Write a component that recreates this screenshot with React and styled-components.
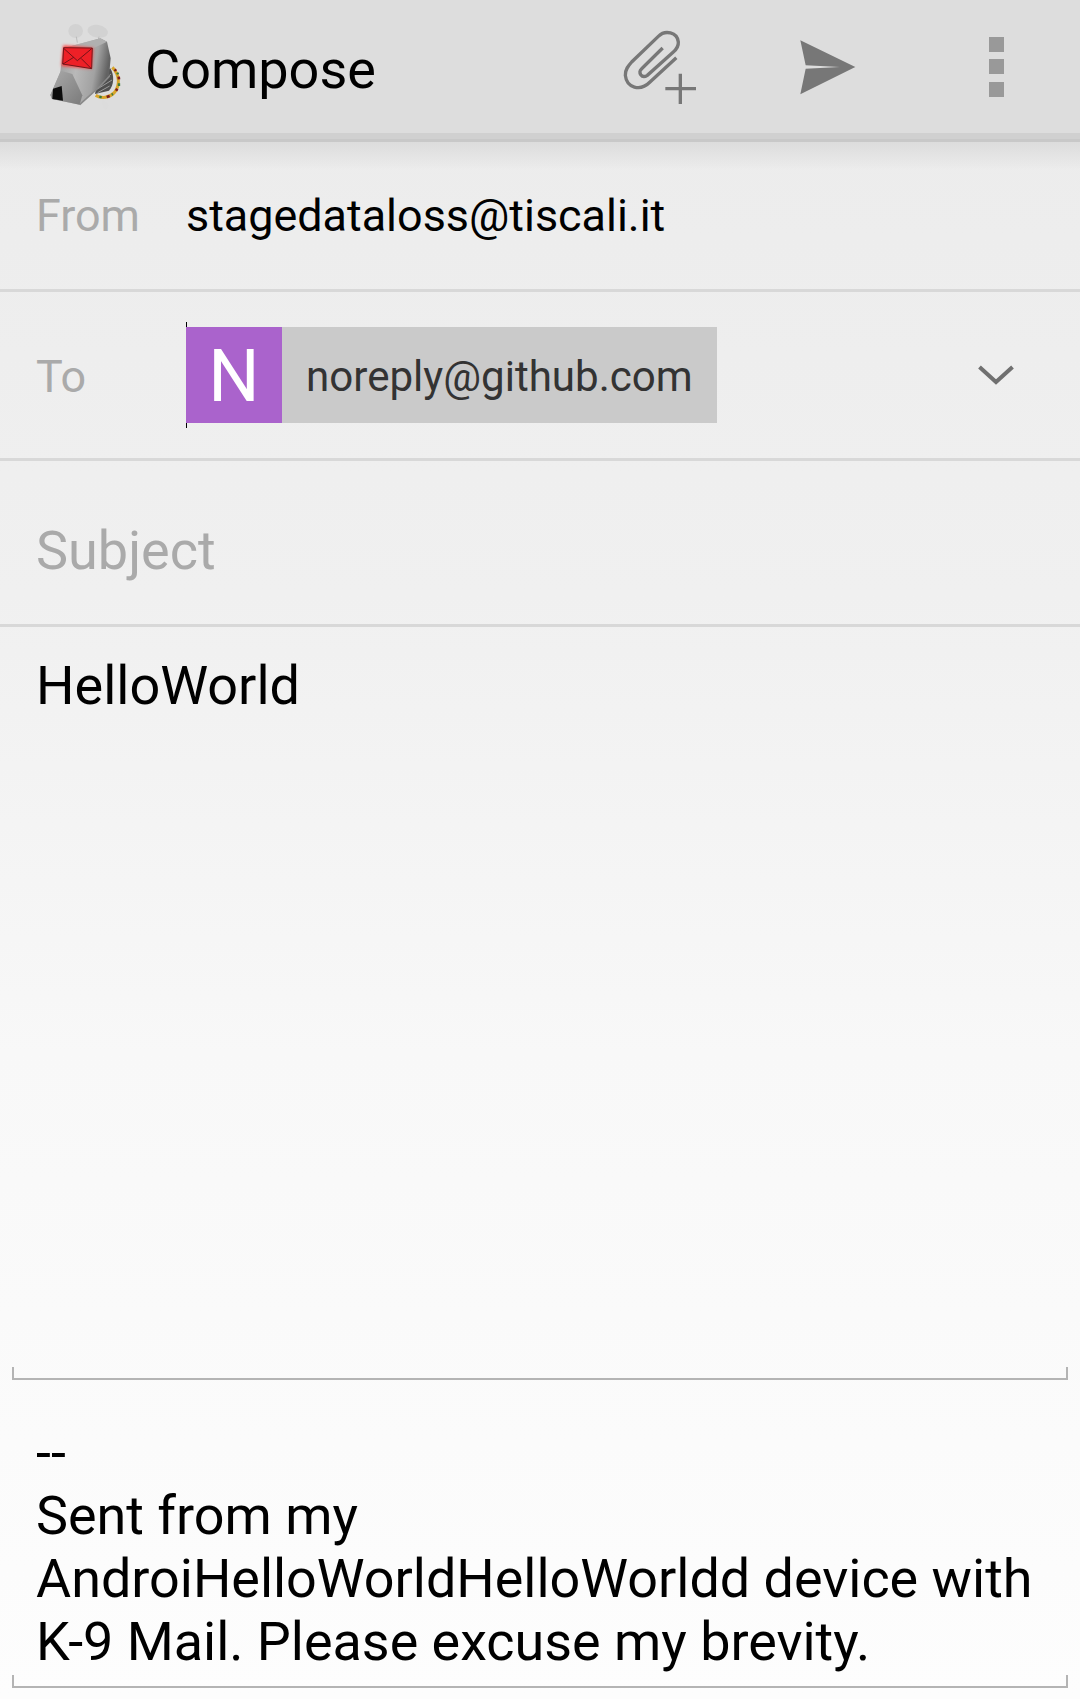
import React from 'react';
import styled, { createGlobalStyle } from 'styled-components';

const Global = createGlobalStyle`
  html, body {
    margin: 0;
    padding: 0;
    background: #fdfdfd;
  }
  * {
    box-sizing: border-box;
  }
`;

const Page = styled.div`
  width: 1080px;
  height: 1699px;
  overflow: hidden;
  display: flex;
  flex-direction: column;
  font-family: Roboto, "Liberation Sans", sans-serif;
  color: #000;
  background: linear-gradient(180deg, #ebebeb 0%, #f0f0f0 35%, #f8f8f8 62%, #fdfdfd 100%);
`;

const ActionBar = styled.header`
  position: relative;
  flex: none;
  height: 142px;
  display: flex;
  align-items: flex-start;
  background: #dddddd;
  border-bottom: 9px solid #d0d0d0;

  &::before {
    content: '';
    position: absolute;
    left: 0;
    right: 0;
    bottom: -9px;
    height: 3px;
    background: #c8c8c8;
  }

  &::after {
    content: '';
    position: absolute;
    left: 0;
    right: 0;
    top: 142px;
    height: 28px;
    background: linear-gradient(180deg, #dcdcdc, rgba(235, 235, 235, 0));
  }
`;

const Logo = styled.svg`
  flex: none;
  width: 80px;
  height: 93px;
  margin: 20px 0 0 47px;
`;

const Title = styled.h1`
  margin: 37px 0 0 18px;
  font-size: 54px;
  line-height: 66px;
  font-weight: 400;
  flex: 1;
`;

const ActionSlot = styled.div`
  flex: none;
  width: 168px;
  height: 133px;
  display: flex;
  align-items: center;
  justify-content: center;
`;

const Dots = styled.div`
  display: flex;
  flex-direction: column;
  gap: 7.5px;
`;

const Dot = styled.span`
  display: block;
  width: 15px;
  height: 15px;
  background: #999999;
`;

const Row = styled.div`
  flex: none;
  height: ${(p) => p.$height}px;
  display: flex;
  align-items: center;
  padding-left: 36px;
  border-bottom: 3px solid #d8d8d8;
`;

const Label = styled.span`
  flex: none;
  width: 150px;
  padding-top: ${(p) => p.$nudge || 0}px;
  font-size: 44.9px;
  color: #aaaaaa;
`;

const Value = styled.span`
  font-size: 44.9px;
`;

const Recipients = styled.div`
  position: relative;
  flex: 1;
  display: flex;
  align-items: center;
  height: 106px;
`;

const Cursor = styled.i`
  position: absolute;
  left: 0;
  top: 0;
  bottom: 0;
  width: 1px;
  background: #000;
`;

const Chip = styled.div`
  position: relative;
  display: flex;
  align-items: center;
  width: 531px;
  height: 96px;
  background: #cacaca;
  color: #333333;
  font-size: 42.1px;
`;

const ChipText = styled.span`
  padding-top: 2px;
`;

const Avatar = styled.span`
  flex: none;
  width: 96px;
  height: 96px;
  margin-right: 24px;
  padding-top: 2px;
  display: flex;
  align-items: center;
  justify-content: center;
  background: #aa63cc;
  color: #fff;
  font-size: 72px;
`;

const Chevron = styled.svg`
  position: absolute;
  right: 66px;
  top: 43px;
  width: 36px;
  height: 20px;
`;

const Subject = styled.span`
  padding-top: 16px;
  font-size: 54px;
  color: #aaaaaa;
`;

const Message = styled.div`
  flex: none;
  height: 740px;
  padding: 29px 0 0 36px;
  font-size: 54px;
  line-height: 60px;
`;

const Bracket = styled.div`
  flex: none;
  height: 13px;
  margin: 0 12px;
  border: 2px solid #b4b4b4;
  border-top: 0;
`;

const Signature = styled.div`
  flex: none;
  height: 295px;
  padding: 41px 0 0 36px;
  font-size: 53.9px;
  line-height: 63px;
`;

const K9Logo = () => (
  <Logo viewBox="140 60 240 279">
    <defs>
      <linearGradient id="head" x1="0" y1="0" x2="1" y2="0.2">
        <stop offset="0" stopColor="#8d8d8d" />
        <stop offset="0.5" stopColor="#b9b9b9" />
        <stop offset="0.8" stopColor="#a2a2a2" />
        <stop offset="1" stopColor="#626262" />
      </linearGradient>
      <linearGradient id="snout" x1="0" y1="0" x2="1" y2="1">
        <stop offset="0" stopColor="#aaaaaa" />
        <stop offset="1" stopColor="#7b7b7b" />
      </linearGradient>
      <filter id="glow" x="-30%" y="-30%" width="160%" height="160%">
        <feGaussianBlur stdDeviation="5" />
      </filter>
    </defs>
    <ellipse cx="226" cy="93" rx="22" ry="21" fill="#d2d2d2" />
    <ellipse cx="292" cy="94" rx="31" ry="19" fill="#d2d2d2" transform="rotate(10 292 94)" />
    <path d="M228 110l3 18M296 110l-6 20" stroke="#bcbcbc" strokeWidth="3" />
    <path d="M336 202C358 224 360 256 342 278C326 294 304 296 286 286" fill="none" stroke="#d8a52a" strokeWidth="9" />
    <path d="M343 208l4 5M355 230l1 8M351 266l-4 6M328 288l-9 3" stroke="#7c1d1d" strokeWidth="8" />
    <path d="M351 218l2 5M356 250l0 8M338 282l-4 2M304 292l-7-2" stroke="#3c7a3c" strokeWidth="7" />
    <path d="M330 205C342 225 342 255 326 272L284 282L292 238Z" fill="#4f4f4f" />
    <path d="M332 222l-34 28M335 240l-42 26M328 258l-36 20" stroke="#9a9a9a" strokeWidth="3" />
    <path d="M188 145L300 115L320 125L331 175L326 232L286 272L238 314L155 297L150 285L180 215Z" fill="url(#head)" />
    <path d="M188 145L300 115L320 125L276 146Z" fill="#b0b0b0" />
    <path d="M182 212L216 222L246 286L238 314L155 297L150 285Z" fill="url(#snout)" />
    <path d="M238 314L300 258L328 228" fill="none" stroke="#8a8a8a" strokeWidth="5" />
    <path d="M158 266L184 258L188 302L156 297Z" fill="#0c0c0c" />
    <path d="M306 300C316 302 326 310 324 320C322 328 314 330 310 326C306 318 304 308 306 300Z" fill="#dcdcdc" />
    <rect x="186" y="140" width="90" height="62" fill="#ff3434" filter="url(#glow)" transform="rotate(5 231 171)" />
    <path d="M190 143L276 144L274 206L187 192Z" fill="#ee2027" stroke="#5b1015" strokeWidth="2.5" />
    <path d="M190 145L231 182L274 146M188 192L220 172M272 205L242 175" fill="none" stroke="#5b1015" strokeWidth="2.5" />
  </Logo>
);

const AttachIcon = () => (
  <svg width="80" height="80" viewBox="60 80 240 240" fill="none" stroke="#777777" strokeWidth="10">
    <path d="M229 172L150 245C120 275 80 262 76 225C75 207 85 196 95 185L175 108C195 88 232 95 235 125C236 140 228 148 220 155L142 225C125 236 112 216 125 205L188 143" />
    <path d="M196 265H288M241 220V311" />
  </svg>
);

const SendIcon = () => (
  <svg width="60" height="60" viewBox="593 110 180 180">
    <path d="M600 120L765 200L600 282L616 205L718 200L616 195Z" fill="#777777" />
  </svg>
);

export default function App() {
  return (
    <>
      <Global />
      <Page>
        <ActionBar>
          <K9Logo />
          <Title>Compose</Title>
          <ActionSlot><AttachIcon /></ActionSlot>
          <ActionSlot><SendIcon /></ActionSlot>
          <ActionSlot>
            <Dots>
              <Dot />
              <Dot />
              <Dot />
            </Dots>
          </ActionSlot>
        </ActionBar>
        <Row $height={150}>
          <Label>From</Label>
          <Value>stagedataloss@tiscali.it</Value>
        </Row>
        <Row $height={169}>
          <Label $nudge={2}>To</Label>
          <Recipients>
            <Cursor />
            <Chip>
              <Avatar>N</Avatar>
              <ChipText>noreply@github.com</ChipText>
            </Chip>
            <Chevron viewBox="0 0 36 20" fill="none" stroke="#707070" strokeWidth="4">
              <path d="M1.5 2L18 17L34.5 2" />
            </Chevron>
          </Recipients>
        </Row>
        <Row $height={166}>
          <Subject>Subject</Subject>
        </Row>
        <Message>HelloWorld</Message>
        <Bracket />
        <Signature>
          --
          <br />
          Sent from my
          <br />
          AndroiHelloWorldHelloWorldd device with
          <br />
          K-9 Mail. Please excuse my brevity.
        </Signature>
        <Bracket />
      </Page>
    </>
  );
}
